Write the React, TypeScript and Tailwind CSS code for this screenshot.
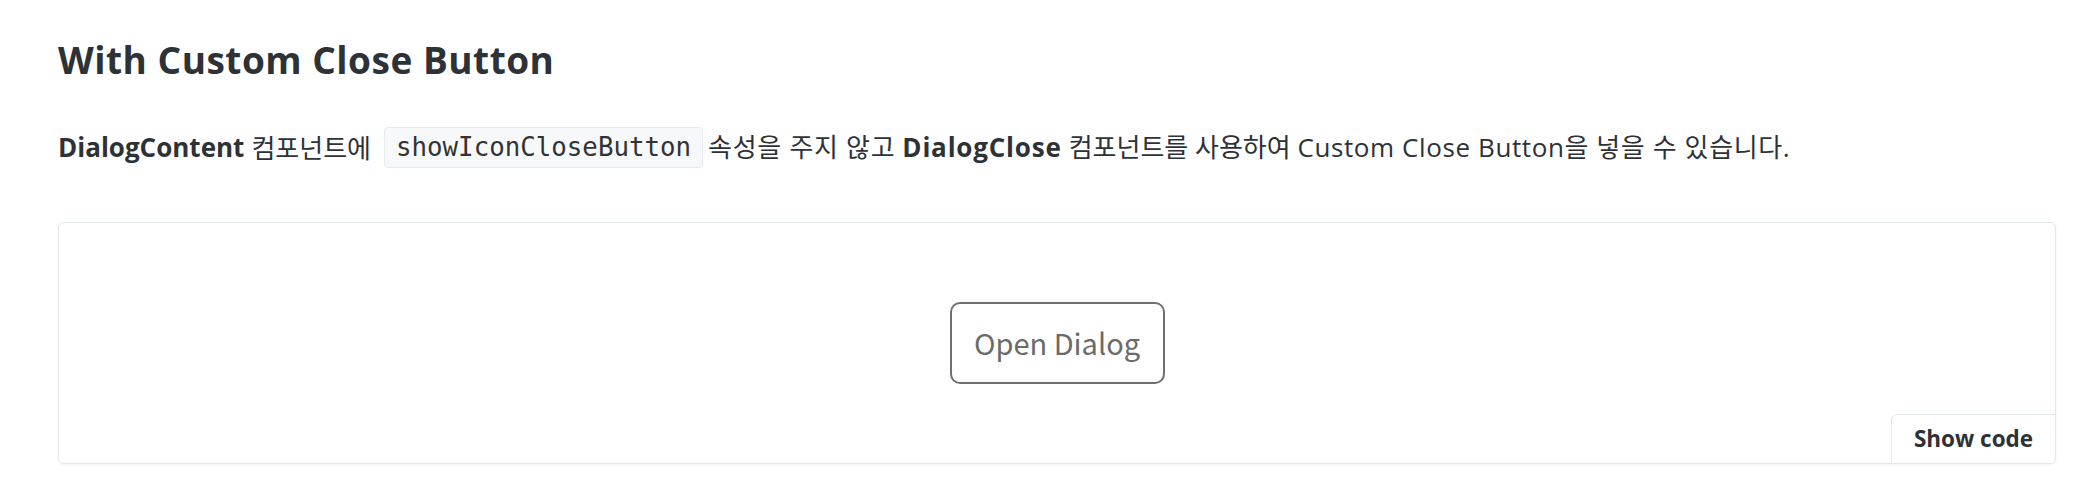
import React from "react";

export default function App() {
  const sans = "font-['Open_Sans','Noto_Sans_CJK_KR',sans-serif]";
  return (
    <div className={`min-h-[500px] w-[2088px] bg-white pl-[58px] pr-[32px] pt-[37px] ${sans}`}>
      <h2 className="text-[37px] font-bold leading-[46px] tracking-[0.5px] text-[#2d3237]">With Custom Close Button</h2>
      <p className="mt-[43px] flex items-center text-[26px] leading-[42px] text-[#2d3237]">
        <span className="font-bold">DialogContent</span>
        <span className="ml-[7px] font-['Noto_Sans_CJK_KR',sans-serif]">컴포넌트에</span>
        <code className="ml-[13px] rounded-[4px] border border-[#e6ebef] bg-[#f6f8fa] px-[11px] font-['DejaVu_Sans_Mono',monospace] text-[25.8px] leading-[39px] text-[#333]">
          showIconCloseButton
        </code>
        <span className="ml-[5px] tracking-[0.7px]">속성을 주지 않고</span>
        <span className="ml-[7px] font-bold tracking-[0.8px]">DialogClose</span>
        <span className="ml-[7px]">
          컴포넌트를 사용하여 <span className="tracking-[0.6px]">Custom Close Button을 넣을 수 있습니다.</span>
        </span>
      </p>
      <div className="relative mt-[54px] flex h-[242px] w-[1998px] items-center justify-center rounded-[6px] border border-[#e3e8ee] bg-white shadow-[0_1px_3px_rgba(0,0,0,0.05)]">
        <button className="flex h-[82px] w-[215px] items-center justify-center rounded-[10px] border-2 border-[#707070] bg-white font-['Noto_Sans_CJK_KR',sans-serif] text-[29px] text-[#6b6b6b]">
          Open Dialog
        </button>
        <button className="absolute bottom-0 right-0 flex h-[49px] w-[164px] items-center justify-center rounded-tl-[6px] rounded-br-[6px] border-l border-t border-[#e3e8ee] bg-white text-[22.5px] font-bold text-[#2d3237]">
          Show code
        </button>
      </div>
    </div>
  );
}
